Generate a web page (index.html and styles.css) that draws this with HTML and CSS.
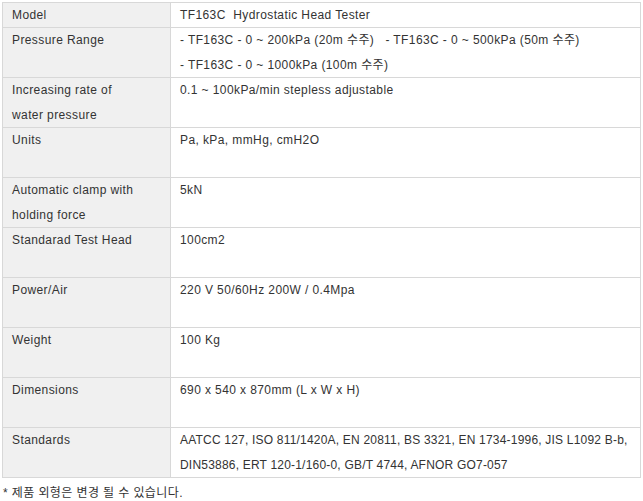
FILE: index.html
```html
<!DOCTYPE html>
<html lang="ko">
<head>
<meta charset="utf-8">
<link rel="stylesheet" href="styles.css">
</head>
<body>
<table class="spec">
  <tr class="row-short">
    <th>Model</th>
    <td>TF163C&nbsp; Hydrostatic Head Tester</td>
  </tr>
  <tr>
    <th>Pressure Range</th>
    <td>- TF163C - 0 ~ 200kPa (20m 수주)&nbsp;&nbsp; - TF163C - 0 ~ 500kPa (50m 수주)<br>- TF163C - 0 ~ 1000kPa (100m 수주)</td>
  </tr>
  <tr>
    <th>Increasing rate of<br>water pressure</th>
    <td>0.1 ~ 100kPa/min stepless adjustable</td>
  </tr>
  <tr>
    <th>Units</th>
    <td>Pa, kPa, mmHg, cmH2O</td>
  </tr>
  <tr>
    <th>Automatic clamp with<br>holding force</th>
    <td>5kN</td>
  </tr>
  <tr>
    <th>Standarad Test Head</th>
    <td>100cm2</td>
  </tr>
  <tr>
    <th>Power/Air</th>
    <td>220 V 50/60Hz 200W / 0.4Mpa</td>
  </tr>
  <tr>
    <th>Weight</th>
    <td>100 Kg</td>
  </tr>
  <tr>
    <th>Dimensions</th>
    <td>690 x 540 x 870mm (L x W x H)</td>
  </tr>
  <tr>
    <th>Standards</th>
    <td class="tight">AATCC 127, ISO 811/1420A, EN 20811, BS 3321, EN 1734-1996, JIS L1092 B-b,<br>DIN53886, ERT 120-1/160-0, GB/T 4744, AFNOR GO7-057</td>
  </tr>
</table>
<p class="note">* 제품 외형은 변경 될 수 있습니다.</p>
</body>
</html>
```
FILE: styles.css
```css
html, body {
  margin: 0;
  padding: 0;
  background: #fff;
}
body {
  font-family: "Liberation Sans", "Noto Sans CJK KR", sans-serif;
  font-size: 12px;
  letter-spacing: 0.4px;
  color: #333;
}
.spec {
  border-collapse: collapse;
  margin: 2px 0 0 2px;
  width: 639px;
  table-layout: fixed;
}
.spec th, .spec td {
  border: 1px solid #d8d8d8;
  padding: 0 8px 0 9px;
  height: 49px;
  line-height: 24.5px;
  vertical-align: top;
  text-align: left;
  font-weight: normal;
  white-space: nowrap;
}
.spec th {
  width: 150px;
  background: #f0f0f0;
}
.spec .tight {
  letter-spacing: 0.2px;
}
.spec .row-short th, .spec .row-short td {
  height: 24px;
  line-height: 24px;
}
.note {
  margin: 7px 0 0 3px;
  line-height: 16px;
}
```
